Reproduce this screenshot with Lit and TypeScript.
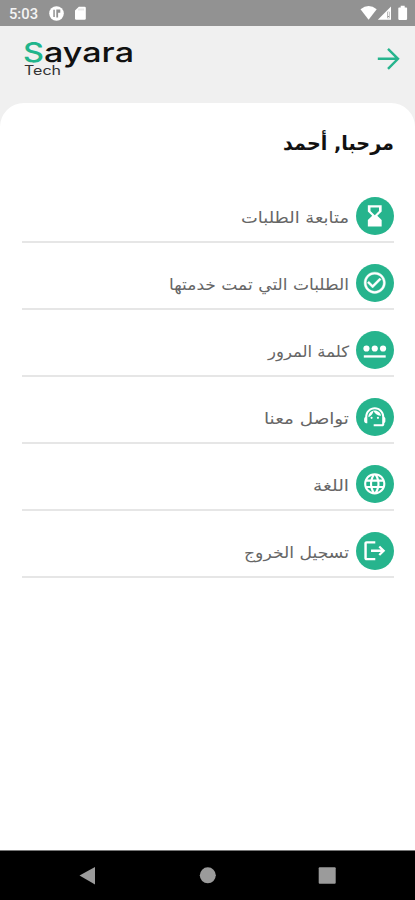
import { LitElement, html, svg, css } from "lit";
import { customElement } from "lit/decorators.js";

// Material-style glyphs on a 24-unit grid
const icons = {
  hourglass: svg`<path fill-rule="evenodd" d="M5.500 2v6h.01L5.500 8.010 9.600 12l-4.100 4 .01.010H5.500V22h13v-5.990h-.010L18.500 16l-4.100-4 4.100-3.990-.010-.010H18.500V2zm2.500 2.200h8v3.300l-4 4-4-4z"/>`,
  check: svg`<path stroke="#fff" stroke-width=".4" d="M16.59 7.58L10 14.17l-3.59-3.58L5 12l5 5 8-8zM12 2C6.48 2 2 6.48 2 12s4.48 10 10 10 10-4.48 10-10S17.52 2 12 2zm0 18c-4.42 0-8-3.58-8-8s3.58-8 8-8 8 3.58 8 8-3.58 8-8 8z"/>`,
  password: svg`<path d="M1.700 17.200h20.600v2.200H1.700z"/><circle cx="4.200" cy="10.800" r="2.900"/><circle cx="12" cy="10.800" r="2.900"/><circle cx="19.800" cy="10.800" r="2.900"/>`,
  support: svg`<path d="M21 12.22C21 6.73 16.74 3 12 3c-4.69 0-9 3.65-9 9.28-.6.34-1 .98-1 1.72v2c0 1.1.9 2 2 2h1v-6.100c0-3.870 3.130-7 7-7s7 3.130 7 7V19h-8v2h8c1.100 0 2-.900 2-2v-1.220c.590-.310 1-.920 1-1.640v-2.300c0-.700-.410-1.310-1-1.620z"/><circle cx="9" cy="13" r="1"/><circle cx="15" cy="13" r="1"/><path d="M18 11.030C17.520 8.180 15.040 6 12.050 6c-3.030 0-6.290 2.510-6.030 6.450 2.470-1.010 4.330-3.210 4.860-5.890 1.310 2.630 4 4.440 7.120 4.470z"/>`,
  globe: svg`<path d="M11.99 2C6.47 2 2 6.48 2 12s4.47 10 9.99 10C17.52 22 22 17.52 22 12S17.52 2 11.99 2zm6.93 6h-2.95c-.32-1.25-.78-2.45-1.38-3.56 1.84.63 3.37 1.91 4.33 3.56zM12 4.04c.83 1.2 1.48 2.53 1.91 3.96h-3.82c.43-1.43 1.08-2.76 1.91-3.96zM4.26 14C4.1 13.36 4 12.69 4 12s.1-1.36.26-2h3.38c-.08.66-.14 1.32-.14 2s.06 1.34.14 2H4.26zm.82 2h2.95c.32 1.25.78 2.45 1.38 3.56-1.84-.63-3.37-1.9-4.33-3.56zm2.95-8H5.08c.96-1.66 2.49-2.93 4.33-3.56C8.81 5.55 8.35 6.75 8.03 8zM12 19.96c-.83-1.2-1.48-2.53-1.91-3.96h3.82c-.43 1.43-1.08 2.76-1.91 3.96zM14.34 14H9.66c-.09-.66-.16-1.32-.16-2s.07-1.35.16-2h4.68c.09.65.16 1.32.16 2s-.07 1.34-.16 2zm.25 5.56c.6-1.11 1.06-2.31 1.38-3.56h2.95c-.96 1.65-2.49 2.93-4.33 3.56zM16.36 14c.08-.66.14-1.32.14-2s-.06-1.34-.14-2h3.38c.16.64.26 1.31.26 2s-.1 1.36-.26 2h-3.38z"/>`,
  logout: svg`<path d="M12.500 3H4.300C3.100 3 2.200 3.900 2.200 5v14c0 1.100.900 2 2.100 2h8.200v-2.200H4.500V5.200h8zM17 7.200l-1.500 1.500 2.200 2.200H8.500v2.200h9.200l-2.200 2.200 1.500 1.500 4.900-4.800z"/>`,
};

const items: { label: string; width: number; icon: keyof typeof icons }[] = [
  { label: "متابعة الطلبات", width: 108, icon: "hourglass" },
  { label: "الطلبات التي تمت خدمتها", width: 180, icon: "check" },
  { label: "كلمة المرور", width: 81, icon: "password" },
  { label: "تواصل معنا", width: 85, icon: "support" },
  { label: "اللغة", width: 36, icon: "globe" },
  { label: "تسجيل الخروج", width: 105, icon: "logout" },
];

@customElement("app-root")
export class AppRoot extends LitElement {
  static styles = css`
    :host {
      display: flex;
      flex-direction: column;
      width: 100%;
      height: 900px;
      background: #f0f0f0;
      overflow: hidden;
      font-family: "DejaVu Sans", sans-serif;
    }
    svg { display: block; overflow: visible; flex: none; }
    .status {
      height: 25.5px;
      flex: none;
      background: #929292;
    }
    .status text { font: 500 15.5px Roboto, sans-serif; fill: #f4f4f4; }
    .header {
      height: 77.5px;
      flex: none;
      display: flex;
      justify-content: space-between;
      box-sizing: border-box;
      padding: 11.5px 14px 0 22px;
    }
    .logo text { font-family: Inter, sans-serif; fill: #111; }
    .logo .initial { fill: #20b58b; font-weight: 500; font-size: 27px; }
    .logo .name { font-weight: 500; font-size: 27px; }
    .logo .sub { font-size: 12.5px; fill: #333; }
    .arrow { margin-top: 10px; }
    .sheet {
      flex: 1;
      background: #fff;
      border-radius: 24px 24px 0 0;
      padding: 23px 21px 0 22px;
      direction: rtl;
    }
    .greeting { height: 50px; }
    .greeting text { font-size: 20px; font-weight: 700; fill: #111; }
    .row {
      height: 67px;
      box-sizing: border-box;
      border-bottom: 2px solid #e6e6e6;
      padding-top: 21px;
      display: flex;
      gap: 7px;
    }
    .badge {
      width: 38px;
      height: 38px;
      border-radius: 50%;
      background: #26b48d;
      display: flex;
      align-items: center;
      justify-content: center;
    }
    .badge svg { fill: #fff; }
    .label text { font-size: 15.5px; fill: #666; }
    .nav {
      height: 49px;
      flex: none;
      background: #000;
      border-top: 1px solid #777;
    }
  `;

  render() {
    return html`
      <div class="status">
        <svg width="415" height="25" viewBox="0 0 415 25">
          <text x="9" y="19" textLength="29" lengthAdjust="spacingAndGlyphs">5:03</text>
          <circle cx="56.5" cy="13.5" r="7.3" fill="#fff"/>
          <path d="M53.300 9.700h1.500v7.300h-1.500zM56.300 9.500h4v3.200h-2.200v4.800h-1.800z" fill="#929292"/>
          <path d="M78.8 6.7h5.8q1.2 0 1.2 1.2v10.7q0 1.2-1.2 1.2h-8.4q-1.2 0-1.2-1.2v-8.1z" fill="#fff"/>
          <path d="M79 8.500v2M81 8.500v2M83 8.500v2" stroke="#d4d4d4"/>
          <path d="M360.5 9.2q8.2-6.4 16.2 0L368.6 19.8z" fill="#fff"/>
          <path fill-rule="evenodd" d="M391 6.5v13.3h-13.2zM387.3 11.8v6.4h2.2v-6.4z" fill="#fff"/>
          <path d="M388.4 12v4M388.4 17v1.2" stroke="#fff" stroke-width="1"/>
          <path d="M400.7 5.8h4v1.6h1.6q.8 0 .8.8v10.9q0 .8-.8.8h-7.2q-.8 0-.8-.8V8.200q0-.8.8-.8h1.600z" fill="#fff"/>
        </svg>
      </div>
      <div class="header">
        <svg class="logo" width="112" height="40" viewBox="0 0 112 40">
          <text class="initial" x="1" y="25" textLength="21" lengthAdjust="spacingAndGlyphs">S</text>
          <text class="name" x="22" y="25" textLength="90" lengthAdjust="spacingAndGlyphs">ayara</text>
          <text class="sub" x="2" y="38" textLength="37" lengthAdjust="spacingAndGlyphs">Tech</text>
        </svg>
        <svg class="arrow" width="24" height="24" viewBox="0 0 24 24" fill="none" stroke="#26b48d" stroke-width="2.400">
          <path d="M.800 11.800H21M11 1.800l10 10-10 10"/>
        </svg>
      </div>
      <div class="sheet">
        <div class="greeting">
          <svg width="112" height="36" viewBox="0 0 112 36">
            <text direction="rtl" x="112" y="24" textLength="111" lengthAdjust="spacingAndGlyphs">مرحبا, أحمد</text>
          </svg>
        </div>
        ${items.map(
          (item) => html`
            <div class="row">
              <div class="badge">
                <svg width="25.500" height="25.500" viewBox="0 0 24 24">${icons[item.icon]}</svg>
              </div>
              <svg class="label" width=${item.width} height="38">
                <text direction="rtl" x=${item.width} y="25.500" textLength=${item.width} lengthAdjust="spacingAndGlyphs">${item.label}</text>
              </svg>
            </div>
          `
        )}
      </div>
      <div class="nav">
        <svg width="415" height="48" viewBox="0 0 415 48" fill="#9b9b9b">
          <path d="M79.500 24.500L95 16v17.500z"/>
          <circle cx="207.800" cy="24.300" r="8"/>
          <rect x="318.700" y="16.200" width="17" height="16.500" rx="1"/>
        </svg>
      </div>
    `;
  }
}
